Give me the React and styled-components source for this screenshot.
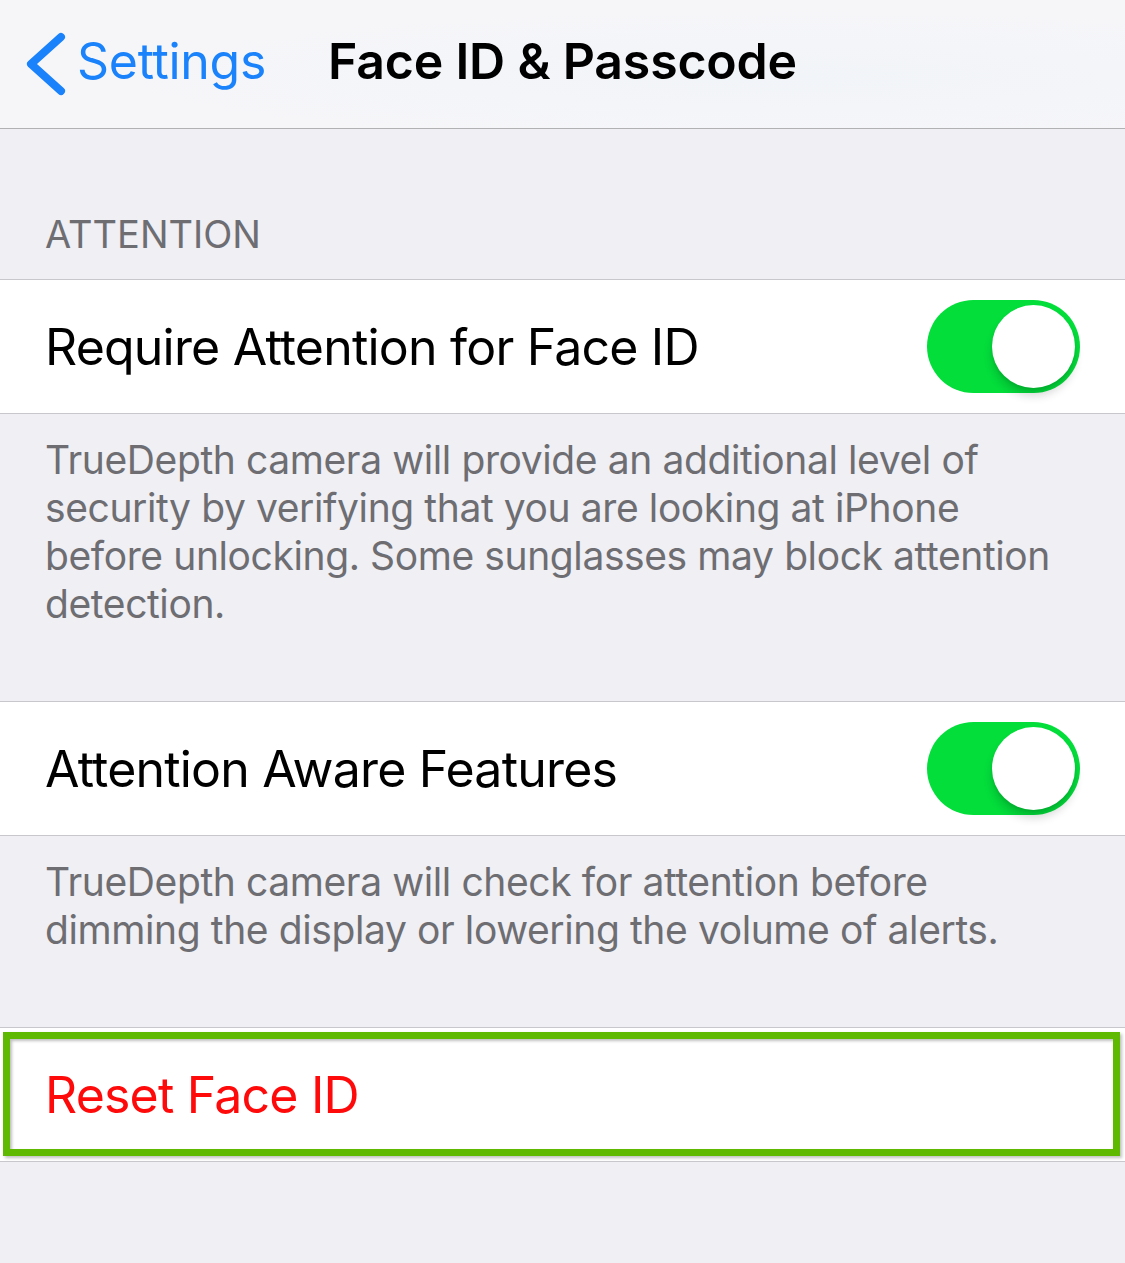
import styled, { createGlobalStyle } from "styled-components";

const GlobalStyle = createGlobalStyle`
    html, body {
        margin: 0;
        padding: 0;
        background: #efeff4;
        font-family: "Inter", "Noto Sans", sans-serif;
        -webkit-font-smoothing: antialiased;
    }
`;

// styled components
const Screen = styled.div`
    width: 1125px;
    min-height: 1263px;
    background: #efeff4;
    overflow: hidden;
`;

const NavBar = styled.header`
    height: 129px;
    display: flex;
    align-items: center;
    padding-bottom: 6px;
    box-sizing: border-box;
    background: radial-gradient(ellipse at 70% 60%, #f1f4f8 0%, #f6f6f9 60%);
    border-bottom: 1px solid #b1b1b4;
`;

const BackButton = styled.button`
    display: flex;
    align-items: center;
    gap: 9px;
    padding: 0 0 0 24px;
    border: none;
    background: none;
    color: #1a82fb;
    font-family: inherit;
    font-size: 50px;
    letter-spacing: -0.3px;
    cursor: pointer;

    svg {
        width: 44px;
        height: 66px;
        margin-top: 6px;
    }
`;

const Title = styled.h1`
    margin: 0 0 0 62px;
    font-size: 50px;
    font-weight: 600;
    letter-spacing: -0.2px;
    color: #000;
`;

const SectionHeader = styled.div`
    height: 150px;
    display: flex;
    align-items: flex-end;
    padding: 0 0 22px 45px;
    box-sizing: border-box;
    font-size: 38px;
    color: #6d6d72;
    text-transform: uppercase;
`;

const Row = styled.div`
    position: relative;
    height: 133px;
    display: flex;
    align-items: center;
    justify-content: space-between;
    padding: 0 45px;
    background: #fff;
    border-top: 1px solid #c8c7cc;
    border-bottom: 1px solid #c8c7cc;
    font-size: 50px;
    letter-spacing: -0.8px;
    color: ${(props) => (props.destructive ? "#ff0a0a" : "#000")};
`;

const Footer = styled.p`
    margin: 0;
    height: ${(props) => props.height}px;
    padding: 22px 45px 0;
    box-sizing: border-box;
    font-size: 39px;
    line-height: 48px;
    letter-spacing: -0.4px;
    color: #6d6d72;
`;

const Track = styled.div`
    position: relative;
    width: 153px;
    height: 93px;
    border-radius: 47px;
    background: #03de3b;
    flex-shrink: 0;
`;

const Knob = styled.div`
    position: absolute;
    top: 5px;
    right: 5px;
    width: 83px;
    height: 83px;
    border-radius: 50%;
    background: #fff;
    box-shadow: 0 8px 10px rgba(0, 0, 0, 0.16), 0 2px 3px rgba(0, 0, 0, 0.08);
`;

// green outline drawn over the reset row
const Highlight = styled.div`
    position: absolute;
    top: 4px;
    left: 3px;
    right: 5px;
    bottom: 5px;
    border: 7px solid #5fb900;
    box-shadow: 2px 2px 3px rgba(0, 0, 0, 0.25), inset 2px 2px 3px rgba(0, 0, 0, 0.25);
    pointer-events: none;
`;

const Spacer = styled.div`
    height: ${(props) => props.height}px;
`;

function Chevron() {
    return (
        <svg viewBox="0 0 44 66" fill="none">
            <polyline
                points="37,6 7,33 37,60"
                stroke="currentColor"
                strokeWidth="8"
                strokeLinecap="round"
                strokeLinejoin="round"
            />
        </svg>
    );
}

function Switch() {
    return (
        <Track>
            <Knob />
        </Track>
    );
}

export default function App() {
    return (
        <Screen>
            <GlobalStyle />
            <NavBar>
                <BackButton>
                    <Chevron />
                    Settings
                </BackButton>
                <Title>Face ID &amp; Passcode</Title>
            </NavBar>

            <SectionHeader>Attention</SectionHeader>

            <Row>
                Require Attention for Face ID
                <Switch />
            </Row>
            <Footer height={287}>
                TrueDepth camera will provide an additional level of security by
                verifying that you are looking at iPhone before unlocking. Some
                sunglasses may block attention detection.
            </Footer>

            <Row>
                Attention Aware Features
                <Switch />
            </Row>
            <Footer height={191}>
                TrueDepth camera will check for attention before dimming the display
                or lowering the volume of alerts.
            </Footer>

            <Row destructive>
                Reset Face ID
                <Highlight />
            </Row>
            <Spacer height={100} />
        </Screen>
    );
}
